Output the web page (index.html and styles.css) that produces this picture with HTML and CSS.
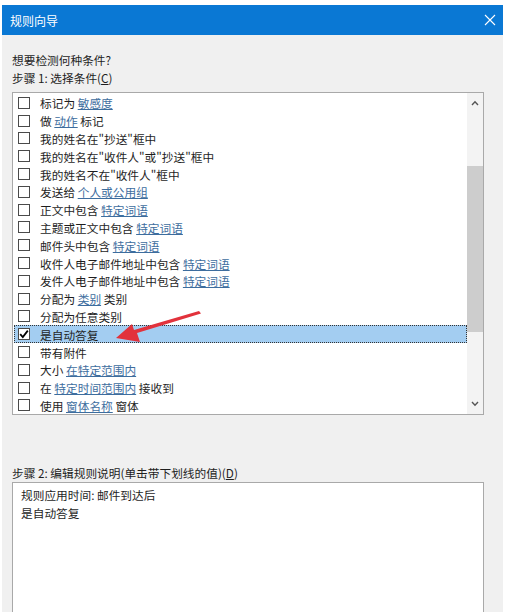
FILE: index.html
```html
<!DOCTYPE html>
<html lang="zh">
<head>
<meta charset="utf-8">
<title>规则向导</title>
<link rel="stylesheet" href="styles.css">
</head>
<body>
<div class="win">
  <div class="titlebar">
    <span class="title">规则向导</span>
    <svg class="close" width="12" height="12" viewBox="0 0 12 12"><path d="M1 1 L11 11 M11 1 L1 11" stroke="#fff" stroke-width="1.1" fill="none"/></svg>
  </div>
  <div class="content">
    <div class="label">想要检测何种条件?</div>
    <div class="label">步骤 1: 选择条件(<u>C</u>)</div>
    <div class="listbox">
      <div class="rows">
        <div class="row"><span class="cb"></span><span>标记为 <a>敏感度</a></span></div>
        <div class="row"><span class="cb"></span><span>做 <a>动作</a> 标记</span></div>
        <div class="row"><span class="cb"></span><span>我的姓名在"抄送"框中</span></div>
        <div class="row"><span class="cb"></span><span>我的姓名在"收件人"或"抄送"框中</span></div>
        <div class="row"><span class="cb"></span><span>我的姓名不在"收件人"框中</span></div>
        <div class="row"><span class="cb"></span><span>发送给 <a>个人或公用组</a></span></div>
        <div class="row"><span class="cb"></span><span>正文中包含 <a>特定词语</a></span></div>
        <div class="row"><span class="cb"></span><span>主题或正文中包含 <a>特定词语</a></span></div>
        <div class="row"><span class="cb"></span><span>邮件头中包含 <a>特定词语</a></span></div>
        <div class="row"><span class="cb"></span><span>收件人电子邮件地址中包含 <a>特定词语</a></span></div>
        <div class="row"><span class="cb"></span><span>发件人电子邮件地址中包含 <a>特定词语</a></span></div>
        <div class="row"><span class="cb"></span><span>分配为 <a>类别</a> 类别</span></div>
        <div class="row"><span class="cb"></span><span>分配为任意类别</span></div>
        <div class="row selected"><span class="cb"><svg width="10" height="10" viewBox="0 0 10 10"><path d="M1.2 5.2 L3.8 8 L8.8 1.6" stroke="#000" stroke-width="1.8" fill="none"/></svg></span><span>是自动答复</span></div>
        <div class="row"><span class="cb"></span><span>带有附件</span></div>
        <div class="row"><span class="cb"></span><span>大小 <a>在特定范围内</a></span></div>
        <div class="row"><span class="cb"></span><span>在 <a>特定时间范围内</a> 接收到</span></div>
        <div class="row"><span class="cb"></span><span>使用 <a>窗体名称</a> 窗体</span></div>
      </div>
      <div class="scrollbar">
        <div class="sbtn"><svg width="8" height="6" viewBox="0 0 8 6"><path d="M1 5 L4 1.8 L7 5" stroke="#555" stroke-width="1.4" fill="none"/></svg></div>
        <div class="track"><div class="thumb"></div></div>
        <div class="sbtn"><svg width="8" height="6" viewBox="0 0 8 6"><path d="M1 1 L4 4.2 L7 1" stroke="#555" stroke-width="1.4" fill="none"/></svg></div>
      </div>
    </div>
    <div class="label step2">步骤 2: 编辑规则说明(单击带下划线的值)(<u>D</u>)</div>
    <div class="desc">
      <div>规则应用时间: 邮件到达后</div>
      <div>是自动答复</div>
    </div>
  </div>
  <svg class="arrow" width="104" height="40" viewBox="0 0 104 40"><path d="M98 0 L100 2.5 L36 22 L39 31 L15 27 L31 13 L33 19 Z" fill="#e2323c"/></svg>
</div>
</body>
</html>
```

FILE: styles.css
```css
* { box-sizing: border-box; }
html, body { margin: 0; padding: 0; background: #fff; }
body {
  font-family: "Noto Sans CJK SC", "Microsoft YaHei", sans-serif;
  font-size: 11.7px;
  color: #1e1e1e;
}
.win {
  position: relative;
  margin: 5px 0 0 2px;
  width: 501px;
  height: 607px;
  background: #f0f0f0;
}
.titlebar {
  height: 30px;
  background: #0a78d4;
  display: flex;
  align-items: center;
  justify-content: space-between;
  padding: 0 7px 0 8px;
}
.title { color: #fff; font-size: 12px; }
.content {
  padding: 16px 0 0 10px;
}
.label { height: 18px; line-height: 18px; }
.listbox {
  margin-top: 5px;
  width: 472px;
  height: 323px;
  border: 1px solid #a9a9a9;
  background: #fff;
  display: flex;
}
.rows {
  flex: 1;
  padding: 1px 0 0 1px;
}
.row {
  height: 17.8px;
  display: flex;
  align-items: center;
  padding-left: 4px;
  white-space: nowrap;
}
.row .cb {
  width: 12px;
  height: 12px;
  border: 1px solid #4a4a4a;
  background: #fff;
  margin-right: 10px;
  display: flex;
  align-items: center;
  justify-content: center;
}
.row a {
  color: #3d6d9e;
  text-decoration: underline;
}
.row.selected {
  background: #a3cdf1;
  outline: 1px dotted #333;
  outline-offset: -1px;
}
.scrollbar {
  width: 16px;
  background: #f3f3f3;
  display: flex;
  flex-direction: column;
}
.sbtn {
  height: 20px;
  display: flex;
  align-items: center;
  justify-content: center;
}
.track { flex: 1; padding-top: 53px; }
.thumb {
  height: 166px;
  background: #cdcdcd;
}
.step2 { margin-top: 49px; }
.desc {
  width: 472px;
  height: 140px;
  border: 1px solid #a9a9a9;
  background: #fff;
  padding: 3px 0 0 8px;
}
.desc div { height: 18px; line-height: 18px; }
.arrow {
  position: absolute;
  left: 99px;
  top: 306px;
}
```
